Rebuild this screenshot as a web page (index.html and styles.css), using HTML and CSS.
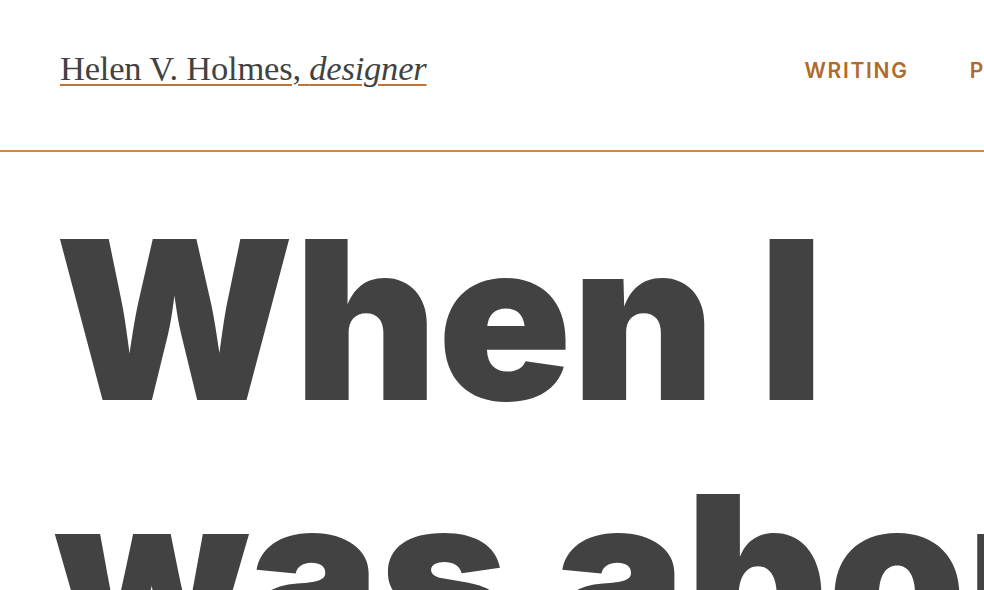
FILE: index.html
```html
<!DOCTYPE html>
<html lang="en">
<head>
<meta charset="utf-8">
<title>Helen V. Holmes, designer</title>
<link rel="stylesheet" href="styles.css">
</head>
<body>
<header class="site-header">
  <a class="site-name" href="#">Helen V. Holmes, <em>designer</em></a>
  <nav class="site-nav">
    <a href="#">Writing</a>
    <a href="#">Projects</a>
    <a href="#">About</a>
  </nav>
</header>
<main class="content">
  <h1 class="headline">When I<br>was about<br>twelve</h1>
</main>
</body>
</html>
```
FILE: styles.css
```css
html, body {
  margin: 0;
  padding: 0;
  overflow: hidden;
  background: #ffffff;
  color: #424242;
}
.site-header {
  display: flex;
  align-items: flex-start;
  height: 152px;
  box-sizing: border-box;
  padding: 49px 0 0 60px;
  border-bottom: 2px solid #d4883f;
  white-space: nowrap;
}
.site-name {
  font-family: "Liberation Serif", serif;
  font-size: 34.5px;
  line-height: 39px;
  color: #424242;
  text-decoration: underline;
  text-decoration-color: #c27532;
  text-decoration-thickness: 2px;
  text-underline-offset: 4px;
  letter-spacing: -0.2px;
  flex-shrink: 0;
}
.site-name em {
  font-style: italic;
}
.site-nav {
  display: flex;
  gap: 61px;
  margin: 10px 0 0 378px;
  flex-shrink: 0;
}
.site-nav a {
  font-family: Inter, sans-serif;
  font-weight: 600;
  font-size: 21px;
  line-height: 24px;
  letter-spacing: 1.7px;
  text-transform: uppercase;
  color: #b06a2c;
  text-decoration: none;
}
.content {
  padding: 0 0 0 55px;
}
.headline {
  margin: 40px 0 0;
  font-family: Inter, sans-serif;
  font-weight: 900;
  font-size: 221px;
  line-height: 255px;
  color: #424242;
  letter-spacing: 0;
  white-space: nowrap;
}
```
